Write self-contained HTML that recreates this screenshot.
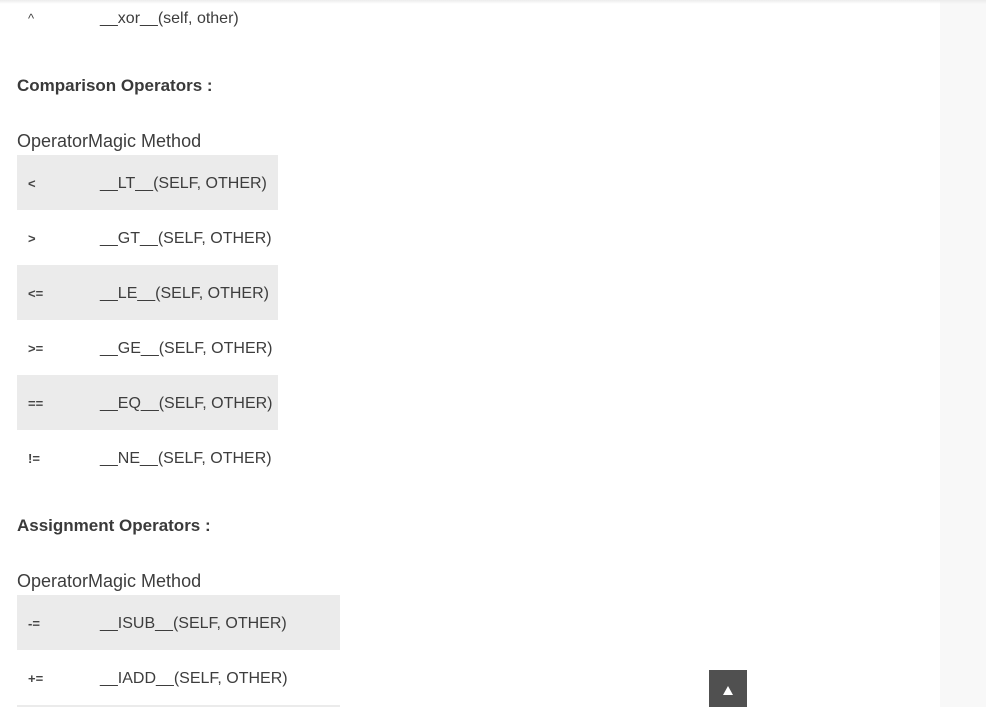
<!DOCTYPE html>
<html><head><style>
html,body{margin:0;width:986px;height:707px;overflow:hidden}
body{background:#fff;font-family:"Liberation Sans",sans-serif;color:#3a3a3a;position:relative}
.side{position:absolute;left:940px;top:0;width:46px;height:707px;background:#f8f8f8}
.shadow{position:absolute;left:0;top:0;width:986px;height:4px;background:linear-gradient(#ececec,#fff0)}
.t{position:absolute;white-space:nowrap}
.row{position:absolute;left:17px;height:55px}
.row.g{background:#ebebeb}
.op{position:absolute;left:11px;top:1px;line-height:55px;font-size:13px;font-weight:bold;color:#444}
.m{position:absolute;left:83px;top:1px;line-height:55px;font-size:16px;color:#3d3d3d;white-space:nowrap}
.h{font-weight:bold;font-size:17px;color:#3a3a3a}
.hd{font-size:18px;color:#3d3d3d}
.btn{position:absolute;left:709px;top:670px;width:38px;height:37px;background:#505050}
.btn:after{content:"";position:absolute;left:14px;top:16px;border-left:5px solid transparent;border-right:5px solid transparent;border-bottom:9px solid #fff}
</style></head><body>
<div class="side"></div>
<div class="shadow"></div>
<div class="row" style="top:-10px;width:261px"><span class="op" style="font-weight:normal">^</span><span class="m">__xor__(self, other)</span></div>
<div class="t h" style="left:17px;top:76px">Comparison Operators :</div>
<div class="t hd" style="left:17px;top:131px">OperatorMagic Method</div>
<div class="row g" style="top:155px;width:261px"><span class="op">&lt;</span><span class="m">__LT__(SELF, OTHER)</span></div>
<div class="row" style="top:210px;width:261px"><span class="op">&gt;</span><span class="m">__GT__(SELF, OTHER)</span></div>
<div class="row g" style="top:265px;width:261px"><span class="op">&lt;=</span><span class="m">__LE__(SELF, OTHER)</span></div>
<div class="row" style="top:320px;width:261px"><span class="op">&gt;=</span><span class="m">__GE__(SELF, OTHER)</span></div>
<div class="row g" style="top:375px;width:261px"><span class="op">==</span><span class="m">__EQ__(SELF, OTHER)</span></div>
<div class="row" style="top:430px;width:261px"><span class="op">!=</span><span class="m">__NE__(SELF, OTHER)</span></div>
<div class="t h" style="left:17px;top:516px">Assignment Operators :</div>
<div class="t hd" style="left:17px;top:571px">OperatorMagic Method</div>
<div class="row g" style="top:595px;width:323px"><span class="op">-=</span><span class="m">__ISUB__(SELF, OTHER)</span></div>
<div class="row" style="top:650px;width:323px"><span class="op">+=</span><span class="m">__IADD__(SELF, OTHER)</span></div>
<div class="row g" style="top:705px;width:323px;height:2px"></div>
<div class="btn"></div>
</body></html>
